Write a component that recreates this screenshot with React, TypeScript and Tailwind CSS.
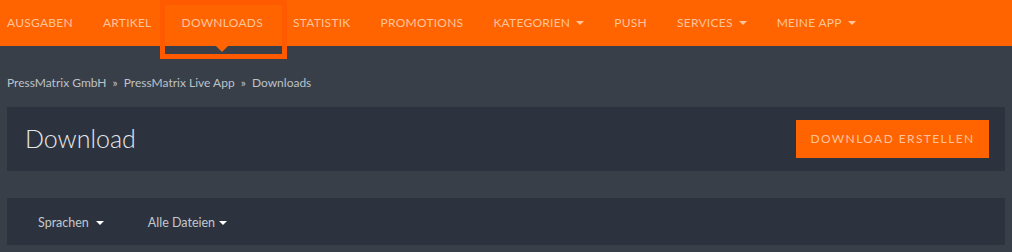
import { useState } from "react";

const navItems = [
    { label: "Ausgaben" },
    { label: "Artikel" },
    { label: "Downloads", active: true },
    { label: "Statistik" },
    { label: "Promotions" },
    { label: "Kategorien", caret: true },
    { label: "Push" },
    { label: "Services", caret: true },
    { label: "Meine App", caret: true },
];

function Caret({ className = "" }: { className?: string }) {
    return (
        <svg width="8" height="4" viewBox="0 0 8 4" className={className}>
            <path d="M0 0 L8 0 L4 4 Z" fill="currentColor" />
        </svg>
    );
}

export default function App() {
    const [lang] = useState("Sprachen");

    return (
        <div
            className="w-[1012px] h-[252px] bg-[#383f48] overflow-hidden"
            style={{ fontFamily: '"Source Sans Pro", Lato, "Noto Sans", sans-serif' }}
        >
            {/* Top nav */}
            <nav className="relative h-[46px] bg-[#ff6400] flex items-stretch pl-[7px]">
                {navItems.map((item) => (
                    <div
                        key={item.label}
                        className="flex items-center gap-[6px] pr-[30px] text-[12px] uppercase tracking-[0.25px] text-[#ffc39c]"
                    >
                        <span className="relative h-full flex items-center">
                            {item.label}
                            {item.active && (
                                <>
                                    <span className="absolute left-[-22px] right-[-24px] top-0 h-[59px] border-[5px] border-[#ff5a00]" />
                                    <span className="absolute left-1/2 -translate-x-1/2 top-[46px] w-0 h-0 border-l-[6px] border-r-[6px] border-t-[6px] border-l-transparent border-r-transparent border-t-[#ff6400]" />
                                </>
                            )}
                        </span>
                        {item.caret && <Caret className="text-[#ffc39c]" />}
                    </div>
                ))}
            </nav>

            {/* Breadcrumb */}
            <div className="px-[7px] pt-[28px] pb-[15px] text-[12px] leading-[18px] text-[#bcc2c8]">
                PressMatrix GmbH <span className="mx-[3px]">»</span> PressMatrix Live App <span className="mx-[3px]">»</span> Downloads
            </div>

            {/* Header card */}
            <div className="mx-[7px] h-[64px] bg-[#2d333e] flex items-center justify-between pl-[18px] pr-[16px]">
                <h1 className="text-[25px] font-light text-[#e4e7ea]">Download</h1>
                <button className="h-[38px] w-[193px] bg-[#ff6400] text-[12px] uppercase tracking-[1.4px] text-[#ffc39c]">
                    Download erstellen
                </button>
            </div>

            {/* Filter card */}
            <div className="mx-[7px] mt-[27px] h-[47px] bg-[#2d333e] flex items-center pl-[31px] gap-[44px] text-[12.5px] text-[#c3c8cd]">
                <div className="flex items-center gap-[7px] pt-[3px]">
                    {lang}
                    <Caret className="text-white" />
                </div>
                <div className="flex items-center gap-[4px] pt-[3px]">
                    Alle Dateien
                    <Caret className="text-white" />
                </div>
            </div>
        </div>
    );
}
